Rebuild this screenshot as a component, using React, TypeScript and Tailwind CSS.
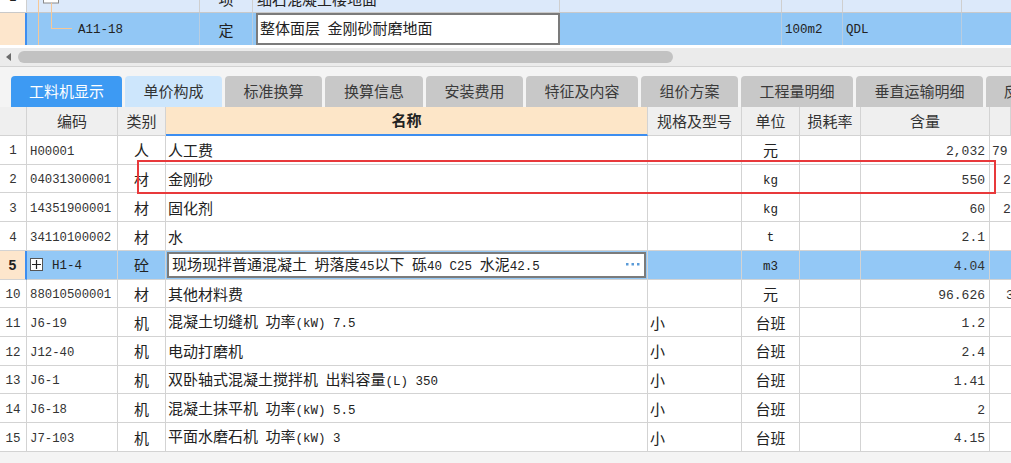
import React from "react";

const CJK = /[\u3000-\u9fff\uff00-\uffef]/;

function Mixed({ text, bold }: { text: string; bold?: boolean }) {
  const parts = text.match(/[\u3000-\u9fff\uff00-\uffef]+|[^\u3000-\u9fff\uff00-\uffef]+/g) || [];
  return (
    <span className="text-[15px] leading-none whitespace-nowrap font-['Noto_Sans_CJK_SC',sans-serif]">
      {parts.map((p, i) =>
        CJK.test(p) ? (
          <span key={i} className={"leading-none text-[15px] font-['Noto_Sans_CJK_SC',sans-serif] " + (bold ? "font-bold" : "")}>
            {p}
          </span>
        ) : (
          <span key={i} className="leading-none whitespace-pre text-[12.5px] font-['Liberation_Mono','Noto_Sans_CJK_SC',monospace]">
            {p}
          </span>
        )
      )}
    </span>
  );
}

type Row = {
  n: string;
  code: string;
  type: string;
  name: string;
  spec?: string;
  unit: string;
  qty: string;
  extra?: string;
  extraPad?: string;
  sel?: boolean;
};

const rows: Row[] = [
  { n: "1", code: "H00001", type: "人", name: "人工费", unit: "元", qty: "2,032", extra: "79", extraPad: "pl-[2px]" },
  { n: "2", code: "04031300001", type: "材", name: "金刚砂", unit: "kg", qty: "550", extra: "2", extraPad: "pl-[13px]" },
  { n: "3", code: "14351900001", type: "材", name: "固化剂", unit: "kg", qty: "60", extra: "2", extraPad: "pl-[13px]" },
  { n: "4", code: "34110100002", type: "材", name: "水", unit: "t", qty: "2.1" },
  { n: "5", code: "H1-4", type: "砼", name: "现场现拌普通混凝土 坍落度45以下 砾40 C25 水泥42.5", unit: "m3", qty: "4.04", sel: true },
  { n: "10", code: "88010500001", type: "材", name: "其他材料费", unit: "元", qty: "96.626", extra: "3", extraPad: "pl-[16px]" },
  { n: "11", code: "J6-19", type: "机", name: "混凝土切缝机 功率(kW) 7.5", spec: "小", unit: "台班", qty: "1.2" },
  { n: "12", code: "J12-40", type: "机", name: "电动打磨机", spec: "小", unit: "台班", qty: "2.4" },
  { n: "13", code: "J6-1", type: "机", name: "双卧轴式混凝土搅拌机 出料容量(L) 350", spec: "小", unit: "台班", qty: "1.41" },
  { n: "14", code: "J6-18", type: "机", name: "混凝土抹平机 功率(kW) 5.5", spec: "小", unit: "台班", qty: "2" },
  { n: "15", code: "J7-103", type: "机", name: "平面水磨石机 功率(kW) 3", spec: "小", unit: "台班", qty: "4.15" },
];

const tabs: { label: string; w: string; kind: "active" | "light" | "gray" }[] = [
  { label: "工料机显示", w: "w-[111px]", kind: "active" },
  { label: "单价构成", w: "w-[97px]", kind: "light" },
  { label: "标准换算", w: "w-[97px]", kind: "gray" },
  { label: "换算信息", w: "w-[98px]", kind: "gray" },
  { label: "安装费用", w: "w-[97px]", kind: "gray" },
  { label: "特征及内容", w: "w-[112px]", kind: "gray" },
  { label: "组价方案", w: "w-[97px]", kind: "gray" },
  { label: "工程量明细", w: "w-[112px]", kind: "gray" },
  { label: "垂直运输明细", w: "w-[127px]", kind: "gray" },
  { label: "反查图形工程量", w: "w-[140px]", kind: "gray" },
];

const lowerCols = "grid grid-cols-[27px_91px_48px_482px_94px_58px_61px_129px_1fr]";
const upperCols = "grid grid-cols-[27px_173px_53px_307px_222px_61px_119px_1fr]";
const cell = "border-r border-b border-[#d3d3d3] flex items-center overflow-hidden";
const mono = "font-['Liberation_Mono','Noto_Sans_CJK_SC',monospace]";

function UpperTable() {
  return (
    <div className="relative h-[45px] bg-white">
      {/* partially scrolled row */}
      <div className="h-[13px] overflow-hidden border-b border-[#c9c9c9]">
        <div className={upperCols + " h-[29px] -mt-[16px] bg-[#dce9fa] text-[#222]"}>
          <div className="bg-white border-r border-[#cfcfcf] flex items-center justify-center text-[12.5px]">
            <span className={mono}>2</span>
          </div>
          <div className="border-r border-[#cfcfcf]" />
          <div className="border-r border-[#cfcfcf] flex items-center justify-center">
            <Mixed text="项" />
          </div>
          <div className="border-r border-[#cfcfcf] flex items-center pl-[4px]">
            <Mixed text="细石混凝土楼地面" />
          </div>
          <div className="border-r border-[#cfcfcf]" />
          <div className="border-r border-[#cfcfcf]" />
          <div className="border-r border-[#cfcfcf]" />
          <div />
        </div>
      </div>
      {/* selected row */}
      <div className={upperCols + " h-[32px] bg-[#92c7f5] text-[#222]"}>
        <div className="bg-[#fde6cc] border-r-2 border-[#3d8ef0]" />
        <div className="border-r border-[#b9cde0] flex items-center pl-[51px]">
          <span className={mono + " text-[12.5px] mt-[3px]"}>A11-18</span>
        </div>
        <div className="border-r border-[#b9cde0] flex items-center justify-center">
          <Mixed text="定" />
        </div>
        <div className="p-0 flex">
          <div className="flex-1 ml-[3px] border-2 border-[#7b7b7b] bg-white flex items-center pl-[2px]">
            <Mixed text="整体面层 金刚砂耐磨地面" />
          </div>
        </div>
        <div className="border-r border-[#b9cde0]" />
        <div className="border-r border-[#b9cde0] flex items-center pl-[3px]">
          <span className={mono + " text-[12.5px] mt-[3px]"}>100m2</span>
        </div>
        <div className="border-r border-[#b9cde0] flex items-center pl-[3px]">
          <span className={mono + " text-[12.5px] mt-[3px]"}>QDL</span>
        </div>
        <div />
      </div>
      {/* tree lines */}
      <svg className="absolute left-0 top-0 pointer-events-none" width="80" height="45">
        <line x1="38.5" y1="0" x2="38.5" y2="45" stroke="#f6c795" strokeWidth="1" />
        <rect x="43.5" y="-10" width="15" height="13" fill="#fff" stroke="#8a8a8a" />
        <line x1="51.5" y1="3" x2="51.5" y2="28.5" stroke="#f6c795" strokeWidth="1" />
        <line x1="51" y1="28.5" x2="72" y2="28.5" stroke="#f6c795" strokeWidth="1" />
      </svg>
    </div>
  );
}

function Scrollbar() {
  return (
    <div className="h-[22px] bg-white pt-[3px]">
      <div className="h-[19px] bg-[#ebebeb] border-b border-[#d2d2d2] flex items-center">
        <div className="w-[18px] flex items-center justify-center">
          <svg width="6" height="8" viewBox="0 0 6 8">
            <path d="M5 0 L0 4 L5 8 Z" fill="#6b6b6b" />
          </svg>
        </div>
        <div className="w-[655px] h-[12px] rounded-full bg-[#c2c2c2]" />
      </div>
    </div>
  );
}

function Tabs() {
  return (
    <div className="h-[40px] pt-[9px] pl-[11px] flex gap-[3px] overflow-hidden">
      {tabs.map((t) => (
        <div
          key={t.label}
          className={
            "shrink-0 h-[31px] rounded-t-[4px] flex items-center justify-center text-[15px] font-['Noto_Sans_CJK_SC',sans-serif] whitespace-nowrap overflow-hidden " +
            t.w +
            " " +
            (t.kind === "active"
              ? "bg-[#3d9af3] text-white"
              : t.kind === "light"
              ? "bg-[#cde6fc] text-[#333]"
              : "bg-[#c8c8c8] text-[#3a3a3a]")
          }
        >
          {t.label}
        </div>
      ))}
    </div>
  );
}

function Dots() {
  return (
    <svg width="14" height="3" viewBox="0 0 14 3" className="shrink-0">
      <rect x="0" y="0" width="2.5" height="2.5" fill="#5b9bd8" />
      <rect x="5.5" y="0" width="2.5" height="2.5" fill="#5b9bd8" />
      <rect x="11" y="0" width="2.5" height="2.5" fill="#5b9bd8" />
    </svg>
  );
}

function LowerTable() {
  const hdr = "border-r border-b border-[#d3d3d3] flex items-center justify-center bg-[#efefef] text-[15px] text-[#333] font-['Noto_Sans_CJK_SC',sans-serif]";
  return (
    <div className="relative bg-white">
      <div className={lowerCols + " h-[29px]"}>
        <div className={hdr} />
        <div className={hdr}>编码</div>
        <div className={hdr}>类别</div>
        <div className="border-r border-[#d3d3d3] border-b-2 border-b-[#3d8ef0] flex items-center justify-center bg-[#fde6c8] text-[15px] font-bold text-[#222] font-['Noto_Sans_CJK_SC',sans-serif]">
          名称
        </div>
        <div className={hdr}>规格及型号</div>
        <div className={hdr}>单位</div>
        <div className={hdr}>损耗率</div>
        <div className={hdr}>含量</div>
        <div className={hdr} />
      </div>
      {rows.map((r) => {
        const bg = r.sel ? "bg-[#93c8f6]" : "bg-white";
        return (
          <div key={r.n} className={lowerCols + " h-[28.72px] text-[#222]"}>
            <div
              className={
                cell +
                " justify-center " +
                (r.sel ? "bg-[#fde6cc] border-r-2 border-r-[#3d8ef0] font-bold text-[14px] font-['Liberation_Sans',sans-serif]" : "bg-white text-[12.5px] text-[#333] " + mono)
              }
            >
              <span className={r.sel ? "mt-[2px]" : "mt-[4px]"}>{r.n}</span>
            </div>
            <div className={cell + " " + bg + " pl-[3px]"}>
              {r.sel ? (
                <>
                  <span className="w-[13px] h-[13px] border border-[#555] bg-white flex items-center justify-center mr-[9px]">
                    <svg width="9" height="9" viewBox="0 0 9 9">
                      <path d="M0 4.5 H9 M4.5 0 V9" stroke="#222" strokeWidth="1.2" />
                    </svg>
                  </span>
                  <span className={mono + " text-[12.5px] mt-[3px]"}>{r.code}</span>
                </>
              ) : (
                <span className={mono + " text-[12.3px] text-[#333] mt-[4px]"}>{r.code}</span>
              )}
            </div>
            <div className={cell + " " + bg + " justify-center"}>
              <Mixed text={r.type} />
            </div>
            <div className={cell + " " + bg + (r.sel ? " p-[1px]" : " pl-[2px]")}>
              {r.sel ? (
                <div className="w-full h-full border-2 border-[#7b7b7b] bg-white flex items-center pl-[3px] pr-[4px]">
                  <div className="flex-1 flex items-center whitespace-nowrap">
                    <Mixed text={r.name} />
                  </div>
                  <Dots />
                </div>
              ) : (
                <Mixed text={r.name} />
              )}
            </div>
            <div className={cell + " " + bg + " pl-[2px]"}>{r.spec ? <Mixed text={r.spec} /> : null}</div>
            <div className={cell + " " + bg + " justify-center"}>
              <Mixed text={r.unit} />
            </div>
            <div className={cell + " " + bg} />
            <div className={cell + " " + bg + " justify-end pr-[4px]"}>
              <span className={mono + " text-[13px] text-[#333] mt-[4px]"}>{r.qty}</span>
            </div>
            <div className={cell + " " + bg + " border-r-0 " + (r.extraPad || "")}>
              {r.extra ? <span className={mono + " text-[13px] text-[#333] mt-[4px]"}>{r.extra}</span> : null}
            </div>
          </div>
        );
      })}
      <div className="absolute left-[137px] top-[53px] w-[859px] h-[34px] border-2 border-[#e8393b] pointer-events-none" />
    </div>
  );
}

export default function App() {
  return (
    <div className="w-[1011px] h-[463px] overflow-hidden bg-[#f4f4f4] font-['Noto_Sans_CJK_SC',sans-serif]">
      <UpperTable />
      <Scrollbar />
      <Tabs />
      <LowerTable />
    </div>
  );
}
